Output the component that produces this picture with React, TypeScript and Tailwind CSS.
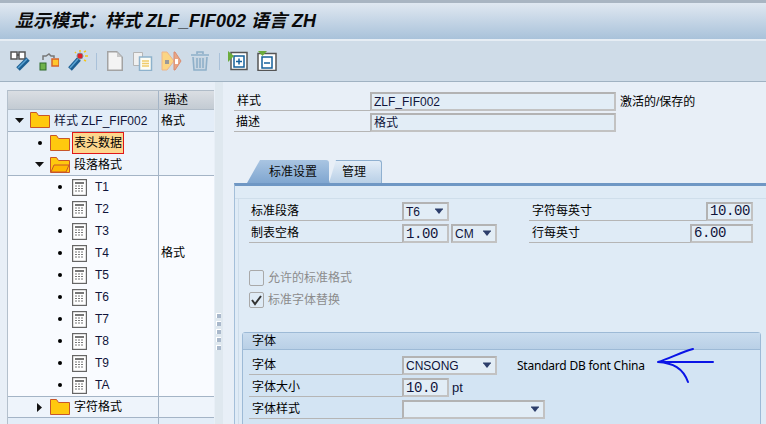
import React from "react";

const FONT = '"Liberation Sans","Noto Sans CJK SC",sans-serif';

function Folder({ open = false }: { open?: boolean }) {
  return (
    <svg width="20" height="16" viewBox="0 0 20 16" className="shrink-0">
      <path d="M.5 15.5V.5h6l2 3h11v12z" fill="#ffc90e" stroke="#c8562a" />
      {open && <path d="M1 15l3-7h15l-3 7z" fill="#ffb900" stroke="#c8562a" />}
    </svg>
  );
}

function Doc() {
  return (
    <svg width="15" height="17" viewBox="0 0 15 17" className="shrink-0">
      <rect x=".5" y=".5" width="14" height="16" fill="#fff" stroke="#666" strokeWidth="1.4" />
      <rect x="3" y="3" width="9" height="2" fill="#777" />
      {[7, 9.5, 12].map((y) => (
        <path key={y} d={`M3 ${y}h9`} stroke="#777" strokeDasharray="2 1" />
      ))}
    </svg>
  );
}

function Bullet() {
  return <span className="w-[4px] h-[4px] rounded-full bg-black shrink-0" />;
}

function TriDown() {
  return (
    <svg width="9" height="5" viewBox="0 0 9 5" className="shrink-0">
      <path d="M0 0h9L4.5 5z" fill="#111" />
    </svg>
  );
}

function TreeRow({ left, right, cls, children }: { left: number; right?: string; cls: string; children: React.ReactNode }) {
  return (
    <div className={`flex h-[22px] ${cls}`}>
      <div className="w-[151px] flex items-center border-r border-[#a4b4c6]" style={{ paddingLeft: left }}>
        {children}
      </div>
      <div className="flex-1 pl-[2px] flex items-center">{right}</div>
    </div>
  );
}

function Tri() {
  return (
    <svg width="10" height="10" viewBox="0 0 10 10">
      <path d="M1 2h8L5 7z" fill="#2c3e6b" />
      <path d="M1 2h8" stroke="#2c3e6b" />
    </svg>
  );
}

function Box({ w, text, select, mono }: { w: number; text?: string; select?: boolean; mono?: boolean }) {
  return (
    <div
      className={`h-[19px] flex items-center justify-between border-2 border-[#b3b3b3] border-b-[#c2c2c2] border-r-[#c2c2c2] bg-[#e2edf6] shrink-0 ${mono ? "font-['Liberation_Mono'] text-[14px] tracking-[-0.4px]" : ""}`}
      style={{ width: w }}
    >
      <span className="pl-[2px] pr-[1px] text-[#10143a]">{text}</span>
      {select && <span className="pr-[3px] flex"><Tri /></span>}
    </div>
  );
}

function Label({ w, children, pl = 2 }: { w: number; children: React.ReactNode; pl?: number }) {
  return (
    <div className="h-[19px] flex items-center border-b border-[#b5b5b5] shrink-0 text-black" style={{ width: w, paddingLeft: pl }}>
      {children}
    </div>
  );
}

function Binoculars() {
  return (
    <svg width="22" height="22" viewBox="0 0 22 22">
      <rect x="1" y="2" width="6" height="7" fill="#fff" stroke="#555" strokeWidth="1.5" />
      <rect x="9" y="2" width="6" height="7" fill="#fff" stroke="#555" strokeWidth="1.5" />
      <path d="M7 5h2" stroke="#555" strokeWidth="2" />
      <path d="M8 19l10-10" stroke="#1d5f92" strokeWidth="5" />
      <path d="M8 18l9-9" stroke="#5ba4d4" strokeWidth="1.5" />
    </svg>
  );
}

function Relations() {
  return (
    <svg width="20" height="20" viewBox="0 0 20 20">
      <rect x="1" y="12" width="6" height="7" fill="#6fb24a" stroke="#2f6b2a" />
      <rect x="13" y="8" width="7" height="7" fill="#ffc72c" stroke="#d8632a" strokeWidth="1.5" />
      <path d="M4 9V5h3l3-2 2 2h3v2" fill="none" stroke="#777" strokeWidth="1.5" />
    </svg>
  );
}

function Wand() {
  return (
    <svg width="22" height="22" viewBox="0 0 22 22">
      <path d="M3 19L12 9" stroke="#1d5f92" strokeWidth="5" />
      <path d="M3 18L11 9" stroke="#5ba4d4" strokeWidth="1.5" />
      <circle cx="13" cy="6" r="3" fill="#e0202a" stroke="#888" />
      <path d="M13 0v2M18 6h3M17 2l2-1M17 10l2 1M8 2l1 1" stroke="#f5c518" strokeWidth="1.5" />
    </svg>
  );
}

function Page() {
  return (
    <svg width="16" height="20" viewBox="0 0 16 20">
      <path d="M.75.75h9l5.5 5.5v13H.75z" fill="#f4f4f4" stroke="#a3a3a3" strokeWidth="1.5" />
      <path d="M10 1v5h5z" fill="#c8c8c8" />
    </svg>
  );
}

function Copy() {
  return (
    <svg width="20" height="19" viewBox="0 0 20 19">
      <path d="M.5.5h9v13h-9z" fill="#f0f0f0" stroke="#b5b5b5" />
      <path d="M6.5 5h12v13.5h-12z" fill="#fdfdf5" stroke="#8eb2cc" strokeWidth="1.5" />
      <path d="M9 9h7M9 11.5h7M9 14h7" stroke="#f0cc6a" strokeWidth="1.5" />
    </svg>
  );
}

function Ab() {
  return (
    <svg width="21" height="20" viewBox="0 0 21 20">
      <path d="M1 1h5l7 9-7 9H1z" fill="#fbd584" stroke="#eeb58a" />
      <path d="M13 1h1l6 9-6 9h-1z" fill="#e9a686" stroke="#d98c70" />
      <path d="M8 4l3 6-3 6" fill="#fbd584" />
      <rect x="4" y="9" width="4" height="4" fill="#999" />
      <rect x="14" y="8" width="3" height="5" fill="#fff" />
    </svg>
  );
}

function Trash() {
  return (
    <svg width="20" height="20" viewBox="0 0 20 20">
      <path d="M7 3V1h6v2M1 4h18M3 6l1 13h12l1-13" fill="#c8d6e2" stroke="#8fb0c9" strokeWidth="1.6" />
      <path d="M7 7v10M10 7v10M13 7v10" stroke="#8fb0c9" strokeWidth="1.6" />
    </svg>
  );
}

function AddCol() {
  return (
    <svg width="20" height="20" viewBox="0 0 20 20">
      <path d="M3 1.5h16v17H3z" fill="#fff" stroke="#555" strokeWidth="1.5" />
      <rect x="6" y="5" width="10" height="11" fill="#fff" stroke="#15609b" strokeWidth="1.5" />
      <path d="M11 7.5v6M8 10.5h6" stroke="#15609b" strokeWidth="1.5" />
      <path d="M0 0l6 5-6 6z" fill="#6bab3c" />
    </svg>
  );
}

function DelCol() {
  return (
    <svg width="20" height="20" viewBox="0 0 20 20">
      <path d="M1 2.5h18v17H1z" fill="#fff" stroke="#555" strokeWidth="1.5" />
      <rect x="5" y="6" width="10" height="11" fill="#fff" stroke="#15609b" strokeWidth="1.5" />
      <path d="M7 12h6" stroke="#15609b" strokeWidth="1.5" />
      <path d="M1 0h9L5.5 5z" fill="#6bab3c" />
    </svg>
  );
}

function Sep() {
  return <span className="w-[1px] h-[17px] bg-[#a9c1d9]" />;
}

const T_ROWS = ["T1", "T2", "T3", "T4", "T5", "T6", "T7", "T8", "T9", "TA"];

export default function App() {
  return (
    <div className="w-[766px] h-[424px] overflow-hidden bg-[#e8eff7] text-[12px] leading-none flex flex-col" style={{ fontFamily: FONT }}>
      <div className="h-[41px] shrink-0 border-t-[3px] border-t-[#a9b5c2] border-b-[2px] border-b-[#e6edf4] bg-gradient-to-b from-[#e0e8f1] to-[#a9c2da] flex items-center pl-[15px] pb-[1px]">
        <span className="text-[18px] font-bold italic text-[#0a0a0a]">显示模式：样式 ZLF_FIF002 语言 ZH</span>
      </div>
      <div className="h-[41px] shrink-0 bg-[#cfdce8] border-b border-b-[#a0b2c2] flex items-center">
        <div className="ml-[10px]"><Binoculars /></div>
        <div className="ml-[7px]"><Relations /></div>
        <div className="ml-[8px]"><Wand /></div>
        <div className="ml-[7px] flex"><Sep /></div>
        <div className="ml-[10px]"><Page /></div>
        <div className="ml-[10px]"><Copy /></div>
        <div className="ml-[8px]"><Ab /></div>
        <div className="ml-[8px]"><Trash /></div>
        <div className="ml-[9px] flex"><Sep /></div>
        <div className="ml-[8px]"><AddCol /></div>
        <div className="ml-[9px]"><DelCol /></div>
      </div>

      <div className="flex flex-1 min-h-0">
        <div className="w-[215px] shrink-0 pl-[7px] pr-[1px] pt-[8px]">
          <div className="border-l border-[#b4c0cc] h-full">
            <div className="flex h-[20px] bg-gradient-to-b from-[#dadee3] to-[#c3cbd3] border-t border-b border-[#b0bcc8]">
              <div className="w-[151px] border-r border-[#a4b4c6]" />
              <div className="flex-1 pl-[5px] flex items-center">描述</div>
            </div>
            <TreeRow left={7} right="格式" cls="bg-[#e3edf8] border-b border-[#a4b4c6]">
              <TriDown />
              <span className="ml-[6px] mr-[4px] -mt-[2px]"><Folder /></span>
              <span className="text-[#10143a]">样式 ZLF_FIF002</span>
            </TreeRow>
            <TreeRow left={30} cls="bg-[#eef4fb]">
              <Bullet />
              <span className="ml-[8px]"><Folder /></span>
              <span className="ml-[2px] h-[22px] w-[52px] bg-[#fdd78d] border border-[#e01818] flex items-center pl-[1px] text-black">表头数据</span>
            </TreeRow>
            <TreeRow left={27} cls="bg-[#eef4fb] border-b border-[#a4b4c6]">
              <TriDown />
              <span className="ml-[6px]"><Folder open /></span>
              <span className="ml-[4px] text-black">段落格式</span>
            </TreeRow>
            {T_ROWS.map((t) => (
              <TreeRow key={t} left={50} right={t === "T4" ? "格式" : undefined} cls="bg-[#f9fbff]">
                <Bullet />
                <span className="ml-[10px] flex"><Doc /></span>
                <span className="ml-[8px] text-[#10143a]">{t}</span>
              </TreeRow>
            ))}
            <TreeRow left={29} cls="bg-[#eef4fb] border-t border-b border-[#a4b4c6]">
              <svg width="5" height="9" viewBox="0 0 5 9"><path d="M0 0l5 4.5L0 9z" fill="#111" /></svg>
              <span className="ml-[8px]"><Folder /></span>
              <span className="ml-[4px] text-black">字符格式</span>
            </TreeRow>
            <div className="h-[22px] bg-[#e3edf8]">
              <div className="w-[151px] h-full border-r border-[#a4b4c6]" />
            </div>
          </div>
        </div>

        <div className="w-[8px] shrink-0 bg-[#dfe8ef] flex flex-col items-start pl-[1px] pt-[231px] gap-[3px]">
          {[0, 1, 2, 3, 4].map((i) => (
            <span key={i} className="w-[5px] h-[5px] bg-[#a9b8cb] border-t border-l border-[#fff]" />
          ))}
        </div>

        <div className="flex-1 min-w-0 pl-[11px] pt-[9px] relative">
          <div className="flex items-center h-[21px]">
            <Label w={136}>
              <span className="ml-[1px]">样式</span>
            </Label>
            <Box w={246} text="ZLF_FIF002" />
            <span className="ml-[4px] text-black">激活的/保存的</span>
          </div>
          <div className="flex items-center h-[21px] mb-[27px]">
            <Label w={136}>描述</Label>
            <Box w={246} text="格式" />
          </div>

          <div className="flex items-end h-[23px] pl-[13px]">
            <div className="h-[23px] w-[82px] rounded-t-[3px] bg-gradient-to-b from-[#a9c5e2] to-[#80a6d0] flex items-center pl-[22px] text-[#0a0a0a] [clip-path:polygon(13px_0,100%_0,100%_100%,0_100%)]">
              标准设置
            </div>
            <div className="h-[23px] w-[53px] rounded-t-[3px] bg-gradient-to-b from-[#e3edf7] to-[#b8cfe6] border border-[#8fb0d0] border-b-0 flex items-center pl-[12px] text-[#0a0a0a] [clip-path:polygon(7px_0,100%_0,100%_100%,0_100%)]">
              管理
            </div>
          </div>

          <div className="border-t-[3px] border-t-[#6f97c4] border-l border-l-[#a4bfd9] bg-[#dfebf6] h-[260px] pl-[3px]">
            <div className="h-[13px] border-b border-b-[#cfdeeb] -ml-[3px]" />
            <div className="border-l border-l-[#cfdeeb] pl-[10px] pt-[3px] flex flex-col">
              <div className="flex h-[22px]">
                <Label w={153}>标准段落</Label>
                <Box w={47} text="T6" select />
                <div className="ml-[80px] flex w-[224px] border-b border-[#b5b5b5] h-[19px] items-center justify-between">
                  <span className="pl-[3px]">字符每英寸</span>
                  <Box w={47} text="10.00" mono />
                </div>
              </div>
              <div className="flex h-[22px]">
                <Label w={153}>制表空格</Label>
                <Box w={47} text="1.00" mono />
                <div className="ml-[2px]"><Box w={46} text="CM" select /></div>
                <div className="ml-[32px] flex w-[224px] border-b border-[#b5b5b5] h-[19px] items-center justify-between">
                  <span className="pl-[3px]">行每英寸</span>
                  <Box w={63} text="6.00" mono />
                </div>
              </div>

              <div className="flex items-center h-[16px] mt-[24px] text-[#8c8c8c]">
                <span className="w-[15px] h-[16px] rounded-[2px] border border-[#a9a9a9] bg-[#dfebf6]" />
                <span className="ml-[4px]">允许的标准格式</span>
              </div>
              <div className="flex items-center h-[16px] mt-[6px] text-[#8c8c8c]">
                <span className="w-[15px] h-[16px] rounded-[2px] border border-[#a9a9a9] bg-[#dfebf6] flex items-center justify-center">
                  <svg width="11" height="11" viewBox="0 0 11 11"><path d="M1 5l3 4 6-8" fill="none" stroke="#333" strokeWidth="2" /></svg>
                </span>
                <span className="ml-[4px]">标准字体替换</span>
              </div>

              <div className="mt-[24px] -ml-[7px] w-[519px] h-[100px] border border-[#9dbad6] rounded-t-[3px] bg-[#d3e4f3]">
                <div className="h-[17px] pl-[9px] flex items-center bg-gradient-to-b from-[#c9dcee] to-[#b9d0e6] border-b border-b-[#9dbad6]">字体</div>
                <div className="pl-[6px] pt-[6px] flex flex-col gap-[3px]">
                  <div className="flex items-center">
                    <Label w={153} pl={3}>字体</Label>
                    <Box w={95} text="CNSONG" select />
                    <span className="ml-[20px] text-black font-['Noto_Sans'] tracking-[-0.22px]">Standard DB font China</span>
                  </div>
                  <div className="flex items-center">
                    <Label w={153} pl={3}>字体大小</Label>
                    <Box w={47} text="10.0" mono />
                    <span className="ml-[3px] text-[#10143a] text-[13px]">pt</span>
                  </div>
                  <div className="flex items-center">
                    <Label w={153} pl={3}>字体样式</Label>
                    <Box w={143} select />
                  </div>
                </div>
              </div>
            </div>
          </div>

          <svg className="absolute left-[432px] top-[264px]" width="60" height="38" viewBox="0 0 60 38">
            <path d="M3 16C14 13 26 6 38 3M3 16h55M3 16C18 17 28 22 33 36" fill="none" stroke="#0a14e6" strokeWidth="2" strokeLinecap="round" />
          </svg>
        </div>
      </div>
    </div>
  );
}
